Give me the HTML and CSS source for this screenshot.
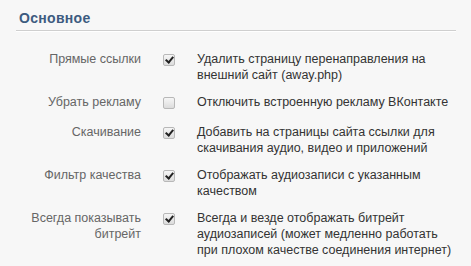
FILE: index.html
```html
<!DOCTYPE html>
<html lang="ru">
<head>
  <meta charset="UTF-8" />
  <title>Основное</title>
  <link rel="stylesheet" href="styles.css">
</head>
<body>

  <div class="settings">
    <h2 class="settings-title">Основное</h2>

    <div class="settings-row">
      <label class="row-label" for="opt1">Прямые ссылки</label>
      <div class="row-check"><input type="checkbox" id="opt1" checked /></div>
      <div class="row-desc">Удалить страницу перенаправления на<br>внешний сайт (away.php)</div>
    </div>

    <div class="settings-row">
      <label class="row-label" for="opt2">Убрать рекламу</label>
      <div class="row-check"><input type="checkbox" id="opt2" /></div>
      <div class="row-desc">Отключить встроенную рекламу ВКонтакте</div>
    </div>

    <div class="settings-row">
      <label class="row-label" for="opt3">Скачивание</label>
      <div class="row-check"><input type="checkbox" id="opt3" checked /></div>
      <div class="row-desc">Добавить на страницы сайта ссылки для<br>скачивания аудио, видео и приложений</div>
    </div>

    <div class="settings-row">
      <label class="row-label" for="opt4">Фильтр качества</label>
      <div class="row-check"><input type="checkbox" id="opt4" checked /></div>
      <div class="row-desc">Отображать аудиозаписи с указанным<br>качеством</div>
    </div>

    <div class="settings-row">
      <label class="row-label" for="opt5">Всегда показывать<br>битрейт</label>
      <div class="row-check"><input type="checkbox" id="opt5" checked /></div>
      <div class="row-desc">Всегда и везде отображать битрейт<br>аудиозаписей (может медленно работать<br>при плохом качестве соединения интернет)</div>
    </div>
  </div>

</body>
</html>
```

FILE: styles.css
```css
body {
  margin: 0;
  background: #f7f7f7;
  font-family: "Liberation Sans", Arial, sans-serif;
  font-size: 12.5px;
  color: #333;
}
.settings {
  padding: 10px 15px 0 16px;
}
.settings-title {
  margin: 0;
  padding: 0 0 4px 3px;
  font-size: 14px;
  font-weight: bold;
  letter-spacing: 0.3px;
  line-height: 16px;
  color: #3d5b80;
  border-bottom: 1px solid #cfcfcf;
  box-shadow: 0 1px 0 #fff;
}
.settings-row {
  display: grid;
  grid-template-columns: 125px 12px 260px;
  column-gap: 22px;
  margin-top: 11px;
  line-height: 16px;
  white-space: nowrap;
}
.settings-title + .settings-row {
  margin-top: 20px;
}
.row-label {
  text-align: right;
  color: #666;
  padding-left: 1px;
}
.row-check {
  height: 19px;
}
.row-check input {
  appearance: none;
  -webkit-appearance: none;
  width: 12px;
  height: 12px;
  margin: 3px 0 0;
  border: 1px solid #b8b8b8;
  border-radius: 2px;
  box-sizing: border-box;
  background: linear-gradient(#f6f6f6, #dcdcdc);
  position: relative;
}
.row-check input:checked::after {
  content: "";
  position: absolute;
  left: 3px;
  top: 0px;
  width: 3px;
  height: 6px;
  border: solid #222;
  border-width: 0 2px 2px 0;
  transform: rotate(40deg);
}
.row-desc {
  color: #333;
}
```
